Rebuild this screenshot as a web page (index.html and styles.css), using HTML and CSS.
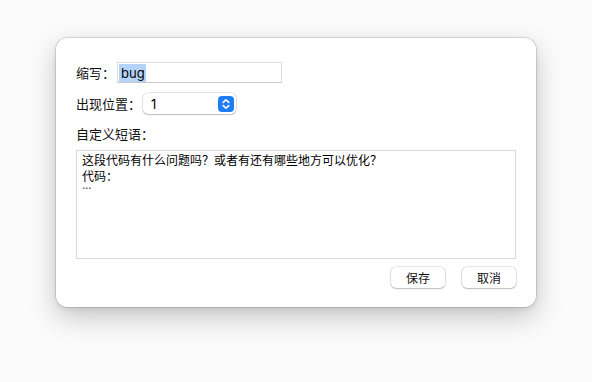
FILE: index.html
```html
<!DOCTYPE html>
<html lang="zh">
<head>
<meta charset="utf-8">
<link rel="stylesheet" href="styles.css">
</head>
<body>
<div class="dialog">
  <div class="row">
    <span class="label">缩写：</span>
    <div class="input"><span class="sel">bug</span></div>
  </div>
  <div class="row row2">
    <span class="label">出现位置：</span>
    <div class="select">
      <span class="val">1</span>
      <span class="stepper">
        <svg width="16" height="16" viewBox="0 0 16 16"><path d="M5.2 6.4 L8 3.8 L10.8 6.4 M5.2 9.6 L8 12.2 L10.8 9.6" fill="none" stroke="#fff" stroke-width="1.6" stroke-linecap="round" stroke-linejoin="round"/></svg>
      </span>
    </div>
  </div>
  <div class="label caption">自定义短语：</div>
  <div class="textarea">
    <div>这段代码有什么问题吗？或者有还有哪些地方可以优化？</div>
    <div>代码：</div>
    <div class="ticks">```</div>
  </div>
  <div class="buttons">
    <button class="btn">保存</button>
    <button class="btn">取消</button>
  </div>
</div>
</body>
</html>
```
FILE: styles.css
```css
html, body {
  margin: 0;
  padding: 0;
}
body {
  background: #fbfbfb;
  width: 592px;
  height: 382px;
  padding-top: 38px;
  box-sizing: border-box;
  font-family: "Inter", "Noto Sans CJK SC", sans-serif;
  color: #111;
}
.dialog {
  width: 480px;
  height: 269px;
  margin: 0 auto;
  box-sizing: border-box;
  background: #fff;
  border-radius: 11px;
  box-shadow: 0 0 0 0.5px rgba(0,0,0,0.22), 0 10px 28px rgba(0,0,0,0.22), 0 2px 6px rgba(0,0,0,0.08);
  padding: 24px 20px 19px 20px;
  display: flex;
  flex-direction: column;
}
.row {
  display: flex;
  align-items: center;
  height: 21px;
}
.row2 {
  margin-top: 10px;
}
.label {
  font-size: 13px;
  line-height: 16px;
  color: #111;
  margin-right: 2px;
}
.input {
  width: 165px;
  height: 21px;
  box-sizing: border-box;
  border: 1px solid #dedede;
  border-bottom-color: #c8c8c8;
  display: flex;
  align-items: center;
  padding-left: 1px;
  font-size: 13px;
}
.sel {
  background: #b3d4f8;
  padding: 0 1px 0 2px;
  line-height: 18px;
  color: #000;
}
.select {
  width: 93px;
  height: 21px;
  box-sizing: border-box;
  border-radius: 5px;
  background: #fff;
  box-shadow: 0 0 0 0.5px rgba(0,0,0,0.2), 0 1px 1.5px rgba(0,0,0,0.18);
  display: flex;
  align-items: center;
  justify-content: space-between;
  padding: 0 2px 0 8px;
  font-size: 13px;
  color: #000;
}
.stepper {
  width: 16px;
  height: 16px;
  border-radius: 4px;
  background: #1f7cf6;
  display: flex;
}
.caption {
  margin-top: 12px;
}
.textarea {
  margin-top: 8px;
  height: 109px;
  box-sizing: border-box;
  border: 1px solid #d9d9d9;
  padding: 2px 5px;
  font-size: 12px;
  line-height: 15.5px;
  color: #000;
}
.ticks {
  font-size: 11px;
  letter-spacing: -0.5px;
  margin-top: 1px;
}
.buttons {
  margin-top: 8px;
  display: flex;
  justify-content: flex-end;
  gap: 17px;
}
.btn {
  width: 54px;
  height: 21px;
  border: none;
  border-radius: 5px;
  background: #fff;
  box-shadow: 0 0 0 0.5px rgba(0,0,0,0.2), 0 1px 1.5px rgba(0,0,0,0.18);
  font-family: "Noto Sans CJK SC", sans-serif;
  font-size: 12px;
  color: #111;
  padding: 0;
}
```
